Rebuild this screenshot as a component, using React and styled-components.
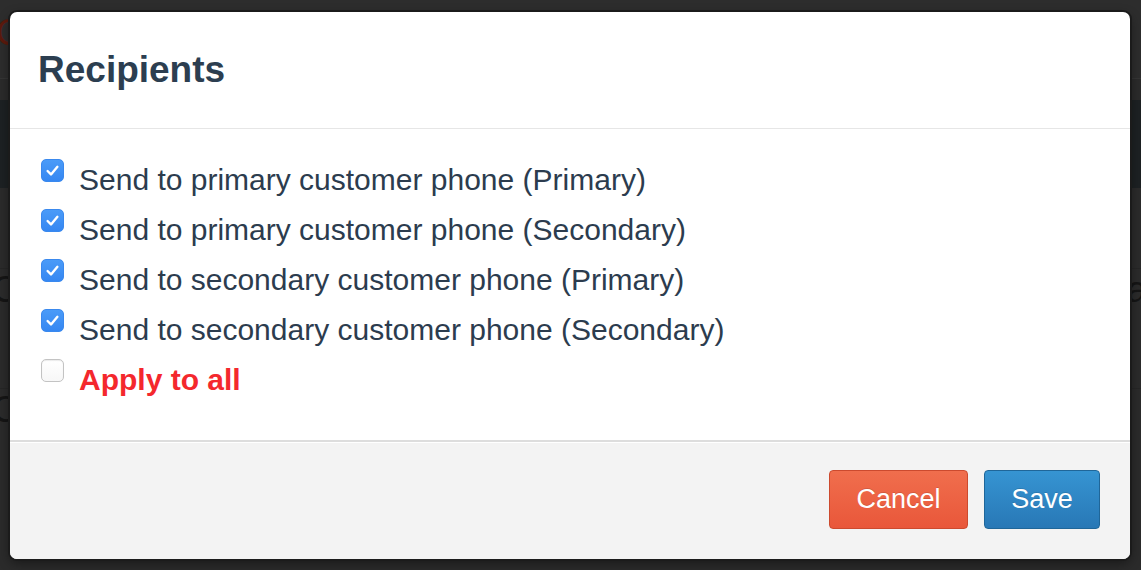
import styled, { createGlobalStyle } from 'styled-components';

const GlobalStyle = createGlobalStyle`
    * { box-sizing: border-box; }
    html, body {
        margin: 0;
        padding: 0;
        background: #2b2b2b;
        font-family: "Liberation Sans", Arial, sans-serif;
        overflow: hidden;
    }
`

const recipients = [
    { label: "Send to primary customer phone (Primary)", checked: true },
    { label: "Send to primary customer phone (Secondary)", checked: true },
    { label: "Send to secondary customer phone (Primary)", checked: true },
    { label: "Send to secondary customer phone (Secondary)", checked: true },
];

export default function App() {
    return (
        <Screen>
            <GlobalStyle />
            <Page>
                <TopBar><Brand>C</Brand></TopBar>
                <SubBar />
                <NavBand />
                <Content>
                    <ContentRow><Faded>C</Faded><Faded>a</Faded></ContentRow>
                    <ContentRow><Faded>C</Faded><Faded></Faded></ContentRow>
                </Content>
            </Page>

            <Modal>
                <Header>
                    <Title>Recipients</Title>
                </Header>
                <Body>
                    {recipients.map((r) => (
                        <Row key={r.label}>
                            <Box checked={r.checked}>
                                {r.checked && (
                                    <svg width="23" height="23" viewBox="0 0 23 23">
                                        <path d="M6.6 12 L10 15.4 L16.4 7.8" fill="none" stroke="#fff" strokeWidth="2.4" strokeLinecap="round" strokeLinejoin="round" />
                                    </svg>
                                )}
                            </Box>
                            <Label>{r.label}</Label>
                        </Row>
                    ))}
                    <Row>
                        <Box />
                        <Label danger>Apply to all</Label>
                    </Row>
                </Body>
                <Footer>
                    <Button kind="cancel">Cancel</Button>
                    <Button kind="save">Save</Button>
                </Footer>
            </Modal>
        </Screen>
    )
}

const Screen = styled.div`
    position: relative;
    width: 100vw;
    height: 100vh;
    overflow: hidden;
`

const Page = styled.div`
    display: flex;
    flex-direction: column;
    height: 100%;
`

const TopBar = styled.div`
    height: 78px;
    background: #2d2d2d;
    display: flex;
    align-items: center;
`

const Brand = styled.span`
    color: #5c1a0d;
    font-size: 36px;
    margin-left: -4px;
    margin-top: -12px;
`

const SubBar = styled.div`
    height: 22px;
    background: #2b2b2b;
    border-top: 1px solid #353535;
`

const NavBand = styled.div`
    height: 88px;
    background: #1d2123;
`

const Content = styled.div`
    display: flex;
    flex-direction: column;
    padding-top: 80px;
`

const ContentRow = styled.div`
    height: 120px;
    display: flex;
    justify-content: space-between;
    align-items: flex-start;
    border-top: 1px solid #262626;
`

const Faded = styled.span`
    color: #151515;
    font-size: 36px;
    margin: 0 -6px 0 -8px;
`

const Modal = styled.div`
    position: absolute;
    left: 10px;
    top: 12px;
    width: 1120px;
    height: 547px;
    display: flex;
    flex-direction: column;
    background: #ffffff;
    border-radius: 7px;
    overflow: hidden;
    box-shadow: 0 0 0 2px #1b1b1b, 0 4px 12px rgba(0, 0, 0, 0.45);
`

const Header = styled.div`
    height: 117px;
    padding: 0 28px;
    display: flex;
    align-items: center;
    border-bottom: 1px solid #e6e6e6;
`

const Title = styled.h3`
    margin: 0;
    font-size: 37px;
    line-height: 40px;
    font-weight: 700;
    color: #2c3e50;
`

const Body = styled.div`
    height: 311px;
    padding: 26px 31px 35px;
    display: flex;
    flex-direction: column;
`

const Row = styled.label`
    height: 50px;
    display: flex;
    align-items: flex-start;
`

const Box = styled.span`
    width: 23px;
    height: 23px;
    margin-top: 4px;
    border-radius: 5px;
    display: flex;
    flex-shrink: 0;
    background: ${(p) => (p.checked ? "linear-gradient(#4a9bf8, #3587f2)" : "linear-gradient(#ffffff, #f7f7f7)")};
    border: 1px solid ${(p) => (p.checked ? "#3a89ee" : "#c3c3c3")};
    box-shadow: ${(p) => (p.checked ? "none" : "inset 0 1px 1px rgba(0,0,0,0.08)")};

    svg {
        margin: -1px;
    }
`

const Label = styled.span`
    margin-left: 15px;
    font-size: 30px;
    line-height: 50px;
    color: ${(p) => (p.danger ? "#f4282d" : "#2c3c4e")};
    font-weight: ${(p) => (p.danger ? 700 : 400)};
    white-space: nowrap;
`

const Footer = styled.div`
    height: 119px;
    background: #f3f3f3;
    border-top: 2px solid #dddddd;
    box-shadow: inset 0 1px 0 #ffffff;
    padding: 28px 30px 30px;
    display: flex;
    justify-content: flex-end;
    align-items: flex-start;
    gap: 16px;
`

const Button = styled.button`
    height: 59px;
    padding: 0 26px;
    border-radius: 4px;
    font-family: "Liberation Sans", Arial, sans-serif;
    font-size: 27px;
    color: #ffffff;
    text-shadow: 0 -1px 0 rgba(0, 0, 0, 0.12);
    cursor: pointer;
    background: ${(p) => (p.kind === "cancel" ? "linear-gradient(#f06e4d, #e9573a)" : "linear-gradient(#3694d2, #2878b6)")};
    border: 1px solid ${(p) => (p.kind === "cancel" ? "#cc4a2e" : "#1f6699")};
    width: ${(p) => (p.kind === "cancel" ? "139px" : "116px")};
`
